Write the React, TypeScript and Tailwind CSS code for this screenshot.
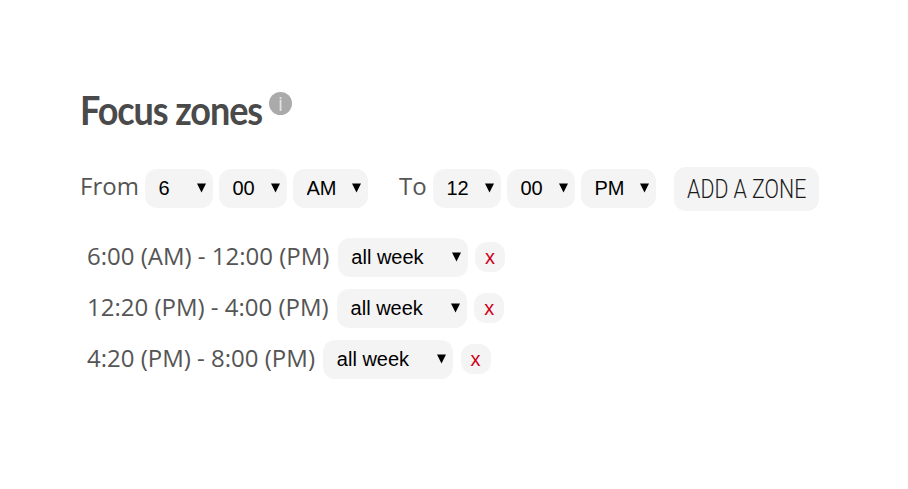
import React from "react";

const sel = "appearance-none w-full bg-[#f4f4f4] rounded-[12px] h-[39px] pl-[13.5px] pb-[1px] text-[20px] text-black font-['Liberation_Sans',Arial,sans-serif] outline-none";

function S({ w, v, className = "" }: { w: string; v: string; className?: string }) {
  return (
    <div className={`relative shrink-0 flex ${w} ${className}`}>
      <select className={sel} defaultValue={v}>
        <option>{v}</option>
      </select>
      <svg className="absolute right-[7px] top-[14px] w-[9px] h-[10px] pointer-events-none" viewBox="0 0 9 10">
        <path d="M0 0.5H9L4.5 9.5Z" fill="#000" />
      </svg>
    </div>
  );
}

function Zone({ text, mt }: { text: string; mt: string }) {
  return (
    <div className={`flex items-start h-[39px] ${mt}`}>
      <span className="text-[24px] text-[#555] whitespace-nowrap ml-[7px] mt-[6px] leading-none">{text}</span>
      <S w="w-[130px]" v="all week" className="ml-[8.4px]" />
      <button className="ml-[7.2px] mt-[4px] w-[30px] h-[30px] rounded-[12px] bg-[#f4f4f4] text-[#d0021b] text-[20px] leading-none font-['Liberation_Sans',Arial,sans-serif]">
        x
      </button>
    </div>
  );
}

export default function App() {
  return (
    <div className="w-[908px] h-[489px] bg-white pl-[80px] pt-[88px] font-['Open_Sans',sans-serif] overflow-hidden">
      <div className="flex items-start h-[44px]">
        <h1 className="w-[181px] shrink-0 font-['Lato',sans-serif] font-bold text-[40px] leading-[44px] text-[#4a4a4a] tracking-[-1.2px] whitespace-nowrap origin-left scale-x-[0.9]">
          Focus zones
        </h1>
        <span className="ml-[8px] mt-[4px] w-[23px] h-[23px] rounded-full bg-[#aaaaaa] text-[#e4e4e4] text-[20px] leading-[23px] text-center">
          i
        </span>
      </div>
      <div className="flex items-start h-[44px] mt-[35px]">
        <span className="text-[24px] text-[#555] leading-none mt-[7px] w-[65px]">From</span>
        <S w="w-[68px]" v="6" className="mt-[2px]" />
        <S w="w-[68px]" v="00" className="ml-[6px] mt-[2px]" />
        <S w="w-[75px]" v="AM" className="ml-[6px] mt-[2px]" />
        <span className="text-[24px] text-[#555] leading-none mt-[7px] ml-[31px] w-[34px]">To</span>
        <S w="w-[68px]" v="12" className="mt-[2px]" />
        <S w="w-[68px]" v="00" className="ml-[6px] mt-[2px]" />
        <S w="w-[75px]" v="PM" className="ml-[6px] mt-[2px]" />
        <button className="ml-[18px] w-[145px] h-[44px] rounded-[12px] bg-[#f4f4f4] text-[#1a1a1a] text-[26px] leading-none font-['Roboto',sans-serif] font-light whitespace-nowrap">
          <span className="inline-block scale-x-[0.82]">ADD A ZONE</span>
        </button>
      </div>
      <div className="mt-[27px]">
        <Zone text="6:00 (AM) - 12:00 (PM)" mt="mt-0" />
        <Zone text="12:20 (PM) - 4:00 (PM)" mt="mt-[12px]" />
        <Zone text="4:20 (PM) - 8:00 (PM)" mt="mt-[12px]" />
      </div>
    </div>
  );
}
